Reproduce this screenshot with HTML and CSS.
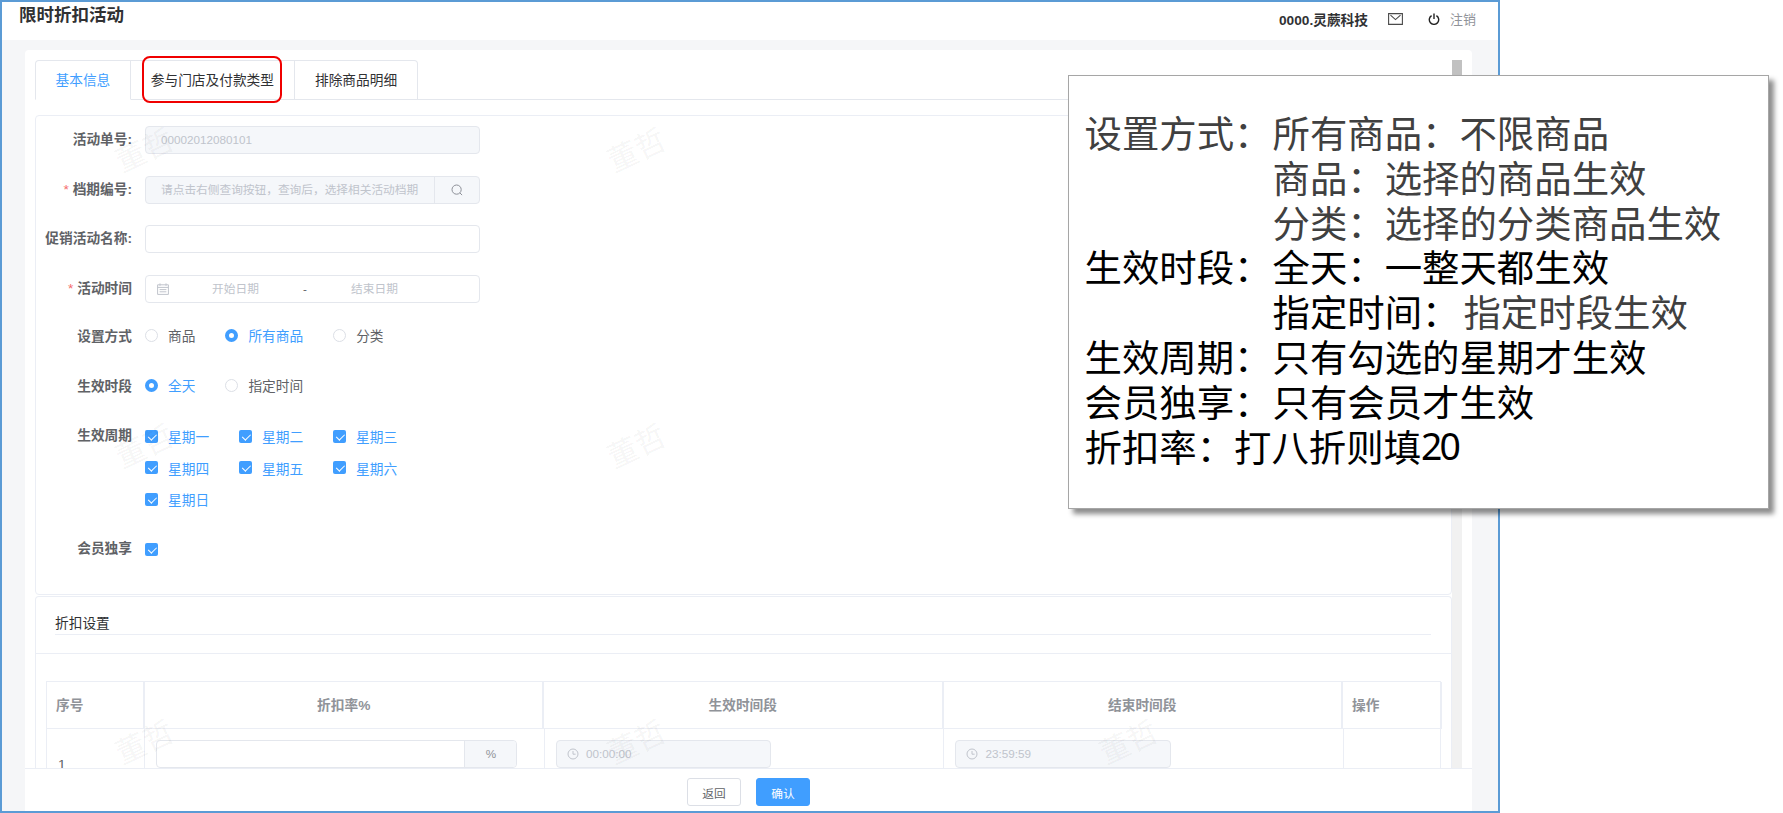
FILE: index.html
```html
<!DOCTYPE html>
<html lang="zh-CN">
<head>
<meta charset="utf-8">
<title>限时折扣活动</title>
<link rel="stylesheet" href="styles.css">
</head>
<body>
<div class="frame">
  <header class="topbar">
    <h1 class="page-title">限时折扣活动</h1>
    <div class="top-actions">
      <span class="company">0000.灵蕨科技</span>
      <svg class="icon-mail" viewBox="0 0 15 12" aria-hidden="true"><path d="M.6.6h13.8v10.8H.6z M2.5 2.2l5 4.4 5-4.4" fill="none" stroke="#4a4a4a" stroke-width="1.1"/></svg>
      <span class="logout">
        <svg class="icon-power" viewBox="0 0 12 12" aria-hidden="true"><path d="M3.6 2.6a4.7 4.7 0 1 0 4.8 0M6 .4v5.6" fill="none" stroke="#222" stroke-width="1.4"/></svg>
        <span class="logout-text">注销</span>
      </span>
    </div>
  </header>
  <main class="main">
    <section class="card">
      <div class="card-body">
        <div class="content">
          <nav class="tabs">
            <span class="tab tab-active">基本信息</span>
            <span class="tab">参与门店及付款类型<i class="red-box"></i></span>
            <span class="tab">排除商品明细</span>
          </nav>
          <form class="panel form-panel">
            <div class="row">
              <label class="label">活动单号:</label>
              <div class="input input-disabled">00002012080101</div>
            </div>
            <div class="row">
              <label class="label"><b class="req">*</b> 档期编号:</label>
              <div class="input input-disabled input-group">
                <span class="group-text">请点击右侧查询按钮，查询后，选择相关活动档期</span>
                <span class="group-btn">
                  <svg class="icon-search" viewBox="0 0 12 12" aria-hidden="true"><circle cx="5.6" cy="5.6" r="4.6" fill="none" stroke="#8d9098" stroke-width="1"/><path d="M8.9 8.9l2.2 2.2" stroke="#8d9098" stroke-width="1"/></svg>
                </span>
              </div>
            </div>
            <div class="row">
              <label class="label">促销活动名称:</label>
              <div class="input"></div>
            </div>
            <div class="row">
              <label class="label"><b class="req">*</b> 活动时间</label>
              <div class="input date-range">
                <svg class="icon-cal" viewBox="0 0 12 12" aria-hidden="true"><path d="M.6 1.8h10.8v9.6H.6zM.6 4.4h10.8M3 .4v2.4M9 .4v2.4M2.6 6.6h6.8M2.6 8.8h6.8" fill="none" stroke="#c0c4cc" stroke-width="1"/></svg>
                <span class="date-start">开始日期</span>
                <span class="date-dash">-</span>
                <span class="date-end">结束日期</span>
              </div>
            </div>
            <div class="row row-tight">
              <label class="label label-low">设置方式</label>
              <div class="options">
                <span class="opt"><i class="radio"></i>商品</span>
                <span class="opt opt-on"><i class="radio radio-on"></i>所有商品</span>
                <span class="opt"><i class="radio"></i>分类</span>
              </div>
            </div>
            <div class="row">
              <label class="label label-low">生效时段</label>
              <div class="options">
                <span class="opt opt-on"><i class="radio radio-on"></i>全天</span>
                <span class="opt"><i class="radio"></i>指定时间</span>
              </div>
            </div>
            <div class="row row-week">
              <label class="label">生效周期</label>
              <div class="week">
                <span class="opt opt-on"><i class="check"></i>星期一</span>
                <span class="opt opt-on"><i class="check"></i>星期二</span>
                <span class="opt opt-on"><i class="check"></i>星期三</span>
                <span class="opt opt-on"><i class="check"></i>星期四</span>
                <span class="opt opt-on"><i class="check"></i>星期五</span>
                <span class="opt opt-on"><i class="check"></i>星期六</span>
                <span class="opt opt-on"><i class="check"></i>星期日</span>
              </div>
            </div>
            <div class="row">
              <label class="label">会员独享</label>
              <div class="options"><span class="opt"><i class="check"></i></span></div>
            </div>
          </form>
          <div class="panel discount-panel">
            <div class="sec-head"><div class="sec-title">折扣设置</div></div>
            <div class="table">
              <div class="thead">
                <div class="th">序号</div>
                <div class="th th-c">折扣率%</div>
                <div class="th th-c">生效时间段</div>
                <div class="th th-c">结束时间段</div>
                <div class="th">操作</div>
              </div>
              <div class="tbody">
                <div class="td td-num">1</div>
                <div class="td">
                  <div class="input cell-input">
                    <span class="cell-fill"></span><span class="percent">%</span>
                  </div>
                </div>
                <div class="td">
                  <div class="input input-disabled time-input">
                    <svg class="icon-clock" viewBox="0 0 12 12" aria-hidden="true"><circle cx="6" cy="6" r="5" fill="none" stroke="#c0c4cc"/><path d="M6 3v3.2h2.6" fill="none" stroke="#c0c4cc"/></svg>00:00:00
                  </div>
                </div>
                <div class="td">
                  <div class="input input-disabled time-input">
                    <svg class="icon-clock" viewBox="0 0 12 12" aria-hidden="true"><circle cx="6" cy="6" r="5" fill="none" stroke="#c0c4cc"/><path d="M6 3v3.2h2.6" fill="none" stroke="#c0c4cc"/></svg>23:59:59
                  </div>
                </div>
                <div class="td"></div>
              </div>
            </div>
          </div>
          <div class="watermarks" aria-hidden="true">
            <span class="wm">董哲</span><span class="wm">董哲</span><span class="wm">董哲</span>
            <span class="wm">董哲</span><span class="wm">董哲</span><span class="wm">董哲</span>
            <span class="wm">董哲</span><span class="wm">董哲</span><span class="wm">董哲</span>
          </div>
        </div>
        <div class="track"><div class="thumb"></div></div>
      </div>
      <footer class="footer">
        <button class="btn" type="button">返回</button>
        <button class="btn btn-primary" type="button">确认</button>
      </footer>
    </section>
  </main>
</div>
<aside class="note">
  <div class="note-row note-grey"><span class="note-key">设置方式：</span><div>所有商品：不限商品<br>商品：选择的商品生效<br>分类：选择的分类商品生效</div></div>
  <div class="note-row"><span class="note-key">生效时段：</span><div>全天：一整天都生效<br>指定时间：<span class="note-soft">指定时段生效</span></div></div>
  <div class="note-row"><span class="note-key">生效周期：</span><div>只有勾选的星期才生效</div></div>
  <div class="note-row"><span class="note-key">会员独享：</span><div>只有会员才生效</div></div>
  <div class="note-row">折扣率：打八折则填<span class="note-num">20</span></div>
</aside>
</body>
</html>
```

FILE: styles.css
```css
* { box-sizing: border-box; }
html, body { margin: 0; height: 813px; overflow: hidden; background: #fff; }
body {
  position: relative;
  font-family: "Liberation Sans", "Noto Sans CJK SC", sans-serif;
  font-size: 13.7px;
  color: #606266;
}
.frame {
  width: 1500px;
  height: 813px;
  border: 2px solid #5b9bd5;
  display: flex;
  flex-direction: column;
}
.topbar {
  height: 38px;
  flex: none;
  background: #fff;
  display: flex;
  justify-content: space-between;
  padding: 0 22px 0 17px;
}
.page-title {
  margin: 0;
  font-size: 17.5px;
  font-weight: 700;
  line-height: 26px;
  color: #303133;
}
.top-actions { display: flex; align-items: center; height: 33px; }
.company { font-weight: 700; color: #303133; width: 89px; white-space: nowrap; }
.icon-mail { width: 15px; height: 12px; margin-left: 20px; }
.logout { display: flex; align-items: center; margin-left: 25px; }
.icon-power { width: 12px; height: 12px; }
.logout-text { margin-left: 10px; color: #909399; font-size: 13px; }

.main {
  flex: 1;
  min-height: 0;
  background: #f5f6f8;
  padding: 10px 26px 0 23px;
  display: flex;
}
.card {
  flex: 1;
  background: #fff;
  border-radius: 4px 4px 0 0;
  display: flex;
  flex-direction: column;
  min-width: 0;
}
.card-body {
  flex: 1;
  min-height: 0;
  display: flex;
  padding: 0 10px 0 10px;
}
.content { flex: 1; min-width: 0; position: relative; overflow: hidden; padding-top: 10px; }
.track { width: 10px; margin-top: 10px; background: #f1f1f1; flex: none; }
.thumb { height: 300px; background: #c1c1c1; }

.tabs {
  display: flex;
  height: 40px;
  border-bottom: 1px solid #e4e7ed;
  margin-bottom: 15px;
}
.tab {
  position: relative;
  height: 40px;
  line-height: 39px;
  padding: 0 20px;
  color: #303133;
  border: 1px solid #e4e7ed;
  border-left: 0;
  white-space: nowrap;
}
.tab:first-child { border-left: 1px solid #e4e7ed; border-radius: 4px 0 0 0; padding: 0 19.5px; }
.tab:last-child { border-radius: 0 4px 0 0; }
.tab-active { color: #409eff; border-bottom-color: #fff; }
.red-box {
  position: absolute;
  left: 11px;
  top: -5px;
  width: 140px;
  height: 47px;
  border: 2px solid #f00000;
  border-radius: 8px;
}

.panel { border: 1px solid #ebeef5; border-radius: 4px; }
.form-panel {
  height: 480px;
  padding: 10px 0 0;
  display: flex;
  flex-direction: column;
  gap: 21.6px;
}
.row { display: flex; align-items: flex-start; min-height: 28px; }
.row-tight { margin-top: -2.9px; }
.row-week { margin-top: 1.8px; }
.label {
  width: 96px;
  flex: none;
  margin-right: 13px;
  text-align: right;
  line-height: 28px;
  font-weight: 700;
  white-space: nowrap;
}
.label-low { height: 28px; line-height: 32px; }
.req { color: #f56c6c; font-weight: 400; }
.input {
  width: 334.5px;
  height: 28px;
  border: 1px solid #e4e7ed;
  border-radius: 4px;
  background: #fff;
  font-size: 11.7px;
  line-height: 26px;
  color: #c0c4cc;
  padding-left: 15px;
}
.input-disabled { background: #f5f7fa; }
.input-group { display: flex; padding-right: 0; }
.group-text { flex: 1; white-space: nowrap; }
.group-btn {
  width: 45px;
  border-left: 1px solid #e4e7ed;
  display: flex;
  align-items: center;
  justify-content: center;
}
.icon-search { width: 12px; height: 12px; }
.date-range { display: flex; align-items: center; padding-left: 11px; }
.icon-cal { width: 12px; height: 12px; flex: none; }
.date-start, .date-end { text-align: center; }
.date-start { width: 133px; }
.date-dash { width: 6px; text-align: center; color: #606266; }
.date-end { width: 133px; }

.options { display: flex; gap: 30px; height: 28px; }
.opt { display: flex; align-items: center; height: 28px; white-space: nowrap; }
.opt-on { color: #409eff; }
.radio {
  width: 13px;
  height: 13px;
  border: 1px solid #dcdfe6;
  border-radius: 50%;
  background: #fff;
  margin-right: 10px;
  flex: none;
}
.radio-on {
  border: 4.5px solid #409eff;
  background: #fff;
}
.check {
  width: 13px;
  height: 13px;
  border-radius: 2px;
  background: #409eff;
  margin-right: 10px;
  flex: none;
  position: relative;
}
.check::after {
  content: "";
  position: absolute;
  left: 4.5px;
  top: 2px;
  width: 3.5px;
  height: 7px;
  border: solid #fff;
  border-width: 0 1px 1px 0;
  transform: rotate(45deg);
}
.week {
  display: grid;
  grid-template-columns: repeat(3, 94px);
  grid-auto-rows: 28px;
  row-gap: 3.5px;
}

.discount-panel { margin-top: 1px; border-bottom: 0; height: 300px; }
.sec-head { height: 57px; border-bottom: 1px solid #ebeef5; }
.sec-title {
  margin: 0 20px 0 19px;
  padding-top: 17px;
  height: 38px;
  line-height: 20px;
  color: #303133;
  border-bottom: 1px solid #ebeef5;
}
.table { margin: 27px 10px 0; border-left: 1px solid #ebeef5; border-top: 1px solid #ebeef5; }
.thead {
  display: grid;
  grid-template-columns: 98.4px 398.6px 399.6px 399.4px 99px;
  height: 47px;
  border-bottom: 1px solid #ebeef5;
}
.th {
  border-right: 2px solid #ebeef5;
  line-height: 47px;
  padding-left: 9px;
  font-weight: 700;
  color: #909399;
}
.th-c { text-align: center; padding-left: 0; }
.tbody {
  display: grid;
  grid-template-columns: 98.4px 399.6px 399.5px 399.5px 97px;
  height: 60px;
}
.td { border-right: 1px solid #ebeef5; padding: 11px 0 0 11px; }
.td-num { padding: 27px 0 0 11px; line-height: 18px; }
.cell-input {
  width: 361px;
  display: flex;
  padding: 0;
  color: #909399;
  background: #fff;
}
.cell-fill { flex: 1; }
.percent {
  width: 52px;
  background: #f5f7fa;
  border-left: 1px solid #e4e7ed;
  text-align: center;
  border-radius: 0 4px 4px 0;
}
.time-input {
  width: 215.5px;
  display: flex;
  align-items: center;
  padding-left: 10px;
}
.icon-clock { width: 12px; height: 12px; margin-right: 7px; }

.watermarks {
  position: absolute;
  inset: 0;
  pointer-events: none;
  display: grid;
  grid-template-columns: repeat(3, 40px);
  grid-auto-rows: 40px;
  column-gap: 452px;
  row-gap: 256px;
  padding: 81px 0 0 90px;
}
.wm {
  display: block;
  width: 60px;
  margin-left: -10px;
  font-size: 30px;
  line-height: 40px;
  color: rgba(0, 0, 0, .05);
  transform: rotate(-25deg);
  white-space: nowrap;
}

.footer {
  height: 43px;
  flex: none;
  background: #fff;
  border-top: 1px solid #ebeef5;
  padding-top: 9px;
  display: flex;
  justify-content: center;
  align-items: flex-start;
  gap: 15px;
  position: relative;
}
.btn {
  width: 54px;
  height: 28px;
  border: 1px solid #dcdfe6;
  border-radius: 3px;
  background: #fff;
  color: #606266;
  font: inherit;
  font-size: 11.7px;
  padding: 0;
}
.btn-primary { background: #409eff; border-color: #409eff; color: #fff; }

.note {
  position: absolute;
  left: 1068px;
  top: 75px;
  width: 701px;
  height: 434px;
  background: #fff;
  border: 1px solid #a6a6a6;
  box-shadow: 5px 5px 5px rgba(0, 0, 0, .45);
  padding: 34px 0 0 15.5px;
  font-family: "Noto Sans CJK SC", sans-serif;
  font-size: 37.4px;
  line-height: 44.8px;
  color: #000;
}
.note-row { display: flex; white-space: nowrap; }
.note-key { width: 188px; flex: none; }
.note-grey { color: #404040; }
.note-soft { color: #404040; margin-left: 4px; }
.note-num { font-family: "Noto Sans", sans-serif; letter-spacing: -3px; }
```
